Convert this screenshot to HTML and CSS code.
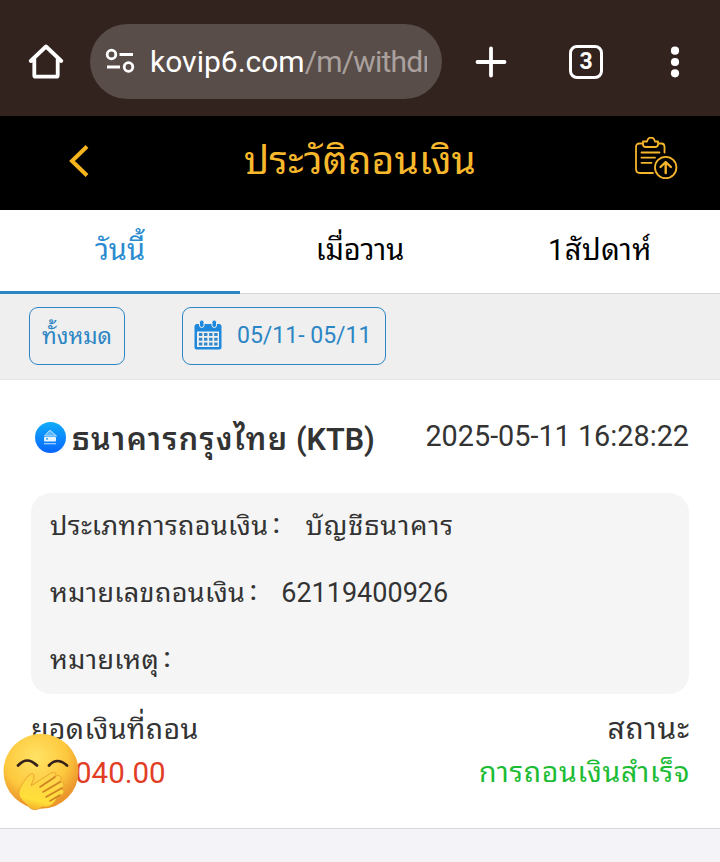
FILE: index.html
```html
<!DOCTYPE html>
<html lang="th">
<head>
<meta charset="utf-8">
<title>ประวัติถอนเงิน</title>
<link rel="stylesheet" href="styles.css">
</head>
<body>
<div class="browser">
  <svg class="home" width="36" height="36" viewBox="0 0 36 36" fill="none" stroke="#fff" stroke-width="3.800" stroke-linejoin="round" stroke-linecap="round"><path d="M2.700 18 18 3.500 33.300 18M6.300 16v16.500q0 1.200 1.200 1.200h21q1.200 0 1.200-1.200V16"/></svg>
  <div class="address">
    <svg width="30" height="26" viewBox="0 0 30 26" fill="none" stroke="#fff" stroke-width="2.800"><circle cx="6.500" cy="6.500" r="4.300"/><path d="M14.500 6.500H28M2 19h13"/><circle cx="23.500" cy="19" r="4.300"/></svg>
    <div class="url">kovip6.com<span>/m/withdr</span></div>
  </div>
  <svg class="plus" width="32" height="32" viewBox="0 0 32 32" stroke="#fff" stroke-width="3.800" stroke-linecap="round"><path d="M16 2.500v27M2.500 16h27"/></svg>
  <div class="count">3</div>
  <svg class="dots" width="10" height="32" viewBox="0 0 10 32" fill="#fff"><circle cx="5" cy="4.700" r="4.100"/><circle cx="5" cy="16" r="4.100"/><circle cx="5" cy="27.300" r="4.100"/></svg>
</div>
<header class="title">
  <svg class="back" width="22" height="34" viewBox="0 0 22 34" fill="none" stroke="#f8b41d" stroke-width="4"><path d="M19 2.500 4 17l15 14.500"/></svg>
  <h1>ประวัติถอนเงิน</h1>
  <svg class="record" width="44" height="44" viewBox="0 0 44 44" fill="none" stroke="#f6b62c" stroke-width="1.800" stroke-linecap="round" stroke-linejoin="round"><path d="M9 6.500H5.500Q2 6.500 2 10v22q0 4 4 4h13M24 6.500h3.500q3 0 3 3.500v5.500M9 4.500h4q1-4 4-4t4 4h3v3q0 2.500-3 2.500h-9q-3 0-3-2.500z"/><path d="M7.500 15.500h18M7.500 20.700h13.500M7.500 25.800h10"/><circle cx="31.700" cy="30.500" r="10.700"/><path d="M31.700 36V25.500M26.500 30l5.200-5 5.200 5" stroke-width="2.400"/></svg>
</header>
<nav class="tabs"><div class="tab active">วันนี้</div><div class="tab">เมื่อวาน</div><div class="tab week">1สัปดาห์</div></nav>
<div class="filters">
  <div class="pill all">ทั้งหมด</div>
  <div class="pill dates">
    <svg width="28" height="31" viewBox="0 0 28 31"><path fill="#1e88dd" d="M3 4h22q2.500 0 2.500 2.500v21q0 2-2 2h-23q-2 0-2-2v-21Q.5 4 3 4z"/><path fill="#efefef" d="M3 11.500h22V27H3z"/><path stroke="#3388ca" stroke-width="3" stroke-dasharray="3.400 1.700" d="M4.900 14.500h18.700M4.900 19.200h18.700M4.900 24h18.700"/><g fill="#1e88dd" stroke="#efefef"><rect x="5.500" y="0" width="4.500" height="7.500" rx="2.200"/><rect x="18" y="0" width="4.500" height="7.500" rx="2.200"/></g></svg>
    <span>05/11- 05/11</span>
  </div>
</div>
<main class="card">
  <div class="bank">
    <svg width="31" height="31" viewBox="0 0 31 31"><defs><linearGradient id="disc" x2="0" y2="1"><stop stop-color="#10adf8"/><stop offset="1" stop-color="#0866ff"/></linearGradient></defs><circle cx="15.500" cy="15.500" r="15.500" fill="url(#disc)"/><path d="m9.500 14 4.500-5q1-1 2 0l5.500 5z" fill="#59b8ff" stroke="#b9e1ff"/><rect x="9" y="15" width="12" height="4.500" rx="1" fill="#e8f5ff"/><path d="M11 16.800h2" stroke="#168cf5" stroke-width="1.300"/><path d="M9 21.700h12" stroke="#a5d3ff" stroke-width="1.200"/></svg>
    <h2><span>ธนาคารกรุงไทย</span> (KTB)</h2>
    <time>2025-05-11 16:28:22</time>
  </div>
  <dl class="details">
    <div class="row"><dt>ประเภทการถอนเงิน</dt><i>:</i><dd class="account">บัญชีธนาคาร</dd></div>
    <div class="row"><dt>หมายเลขถอนเงิน</dt><i>:</i><dd class="digits">62119400926</dd></div>
    <div class="row"><dt class="note">หมายเหตุ</dt><i>:</i></div>
  </dl>
  <div class="summary">
    <div class="labels"><span class="amount-label">ยอดเงินที่ถอน</span><span class="status-label">สถานะ</span></div>
    <div class="values"><span class="amount">040.00</span><span class="status">การถอนเงินสำเร็จ</span></div>
    <svg class="emoji" width="77" height="79" viewBox="0 0 77 79"><defs><radialGradient id="face" cx=".43" cy=".32" r=".64"><stop stop-color="#ffe365"/><stop offset=".66" stop-color="#fdc83d"/><stop offset="1" stop-color="#eb952c"/></radialGradient><linearGradient id="hand" x1=".6" x2=".3" y2="1"><stop stop-color="#ffd14d"/><stop offset=".75" stop-color="#ffdf38"/><stop offset="1" stop-color="#f5ae2b"/></linearGradient></defs><circle cx="38" cy="38.300" r="37.500" fill="url(#face)"/><path d="M15 32.500q9-10 19 0M46 32.500q8-9 18 0" fill="none" stroke="#35211a" stroke-width="2.700" stroke-linecap="round"/><path d="M17 55Q20 49 25 43q4-4 6-1 1 2-2 8l-1 3 20-13q4-2 5 1 0 1-2 3 5-3 7 0 1 3-2 5 4-1 5 2 0 3-3 5 3 0 3 3-1 3-7 6-3 7-10 9h-5Q32 79 27 75L19 67q-5-5-2-12z" fill="url(#hand)" stroke="#e59c2b" stroke-width=".8"/><path d="m37 54 15-10M40 59l17-10M43 64l16-9M47 68l10-6" fill="none" stroke="#ce8121" stroke-width="1.600" stroke-linecap="round"/></svg>
  </div>
</main>
</body>
</html>
```
FILE: styles.css
```css
*{box-sizing:border-box}
body{margin:0;width:720px;height:862px;overflow:hidden;background:#f3f3f8;color:#333;font-family:Roboto,"Noto Sans Thai Looped","Noto Sans",sans-serif;white-space:nowrap}
h1,h2,dl,dd{margin:0}
svg{flex:none;display:block}
.browser{height:116px;background:#32231f;display:flex;align-items:center;padding:0 0 0 28px}
.browser>*{position:relative}
.home{top:3px}
.address{top:3px;margin-left:26px;width:352px;height:75px;border-radius:38px;background:#594d49;display:flex;align-items:center;padding-left:15px;gap:15px}
.url{width:277px;overflow:hidden;color:#fff;font:30px/44px Roboto,sans-serif;padding-top:1px}
.url span{color:#aaa19e;letter-spacing:-.8px}
.plus{top:4px;margin-left:33px}
.count{top:4px;margin-left:62px;width:34px;height:34px;border:3.500px solid #fff;border-radius:8px;color:#fff;font:700 23px/27px Roboto,sans-serif;text-align:center}
.dots{top:4px;margin-left:67px}
.title{height:94px;background:#000;display:flex;align-items:center;padding:0 42px 0 68px}
.title h1{font-weight:400;color:#f8b82c;font-size:39px;line-height:60px;letter-spacing:.15px;margin:-5px auto 0 154px}
.back{margin-top:-4px}
.record{margin-top:-9px}
.tabs{height:84px;background:#fff;border-bottom:1px solid #d8d8d8;display:grid;grid-template-columns:repeat(3,1fr);color:#000;font-size:29px;line-height:80px;text-align:center}
.tab{height:84px}
.week{letter-spacing:.5px}
.active{color:#2c8cd0;border-bottom:3px solid #2c86c0}
.filters{height:86px;background:#efefef;border-bottom:1px solid #e6e6e6;display:flex;align-items:flex-start;padding:13px 29px;gap:57px}
.pill{height:58px;border:1px solid #2c86c4;border-radius:9px;color:#2c86c4;display:flex;align-items:center}
.all{width:96px;justify-content:center;font-size:22.500px;padding-bottom:4px}
.dates{width:204px;padding:0 0 2px 11px;gap:15px;font-size:23px}
.card{height:449px;background:#fff;border-bottom:1px solid #d7d7dc;padding:37px 31px 0}
.bank{height:76px;display:flex;align-items:flex-start;padding-left:4px}
.bank svg{margin-top:5px}
.bank h2{font-size:30.500px;line-height:44px;margin:1px 0 0 6px;font-weight:600}
.bank h2 span{letter-spacing:1.400px}
.bank time{font-size:28.800px;line-height:38px;margin-left:auto}
.details{height:201px;border-radius:20px;background:#f5f5f5;padding-left:19px;font-size:27px}
.row{height:67px;display:flex;align-items:center;padding-bottom:9px}
.row dt{letter-spacing:.35px}
.row i{width:16px;font-style:normal;font-weight:500;text-align:center;margin:4px 21px 0 0}
.row .account{letter-spacing:.9px}
.row .digits{margin:7px 0 0 -1px}
.summary{position:relative;padding-top:10px;font-size:28.500px}
.labels,.values{height:43px;display:flex;justify-content:space-between;align-items:center}
.amount-label{letter-spacing:.35px}
.status-label{font-size:30px;letter-spacing:.8px;margin-right:-1px}
.amount{color:#e23d26;font-size:29.500px;padding:8px 0 0 44px}
.status{color:#1dbc35;letter-spacing:.7px;margin-right:-1px}
.emoji{position:absolute;left:-28px;top:39px}
```
